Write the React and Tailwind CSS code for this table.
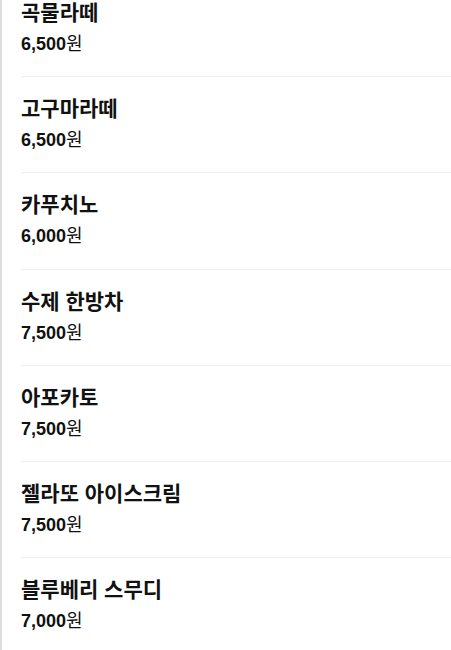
import React from "react";

const items = [
  ["곡물라떼", "6,500"],
  ["고구마라떼", "6,500"],
  ["카푸치노", "6,000"],
  ["수제 한방차", "7,500"],
  ["아포카토", "7,500"],
  ["젤라또 아이스크림", "7,500"],
  ["블루베리 스무디", "7,000"],
];

export default function App() {
  return (
    <div
      className="w-[451px] h-[650px] overflow-hidden bg-white border-l-2 border-[#dcdcdc] text-[#111]"
      style={{ fontFamily: '"Liberation Sans", "Noto Sans CJK KR", sans-serif' }}
    >
      <div className="-mt-[19px] pl-[19px]">
        {items.map(([name, price]) => (
          <div key={name} className="pt-[18px] pb-[20.2px] border-b border-[#f0f0f0]">
            <div className="text-[21px] leading-[28px] font-bold">{name}</div>
            <div className="mt-[5px] text-[18px] leading-[24px]">
              <span className="font-bold">{price}</span>
              <span>원</span>
            </div>
          </div>
        ))}
      </div>
    </div>
  );
}
